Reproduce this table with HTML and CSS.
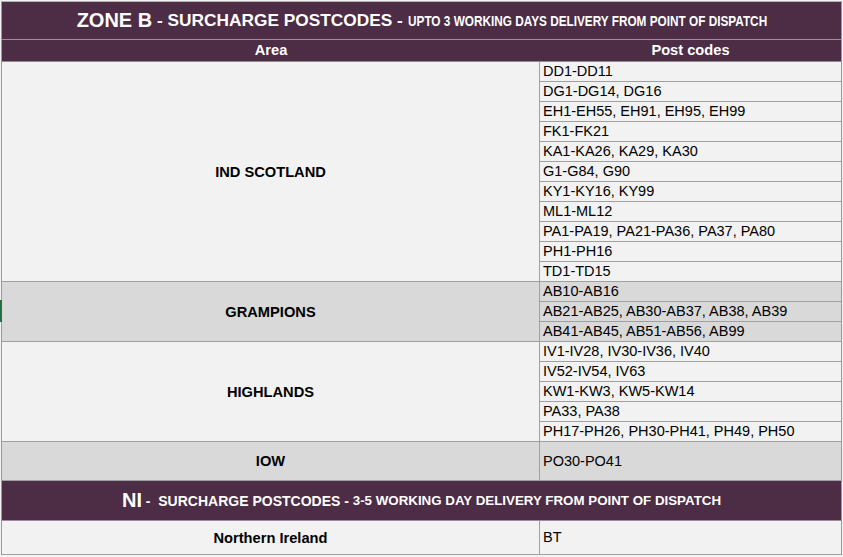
FILE: index.html
```html
<!DOCTYPE html>
<html>
<head>
<meta charset="utf-8">
<link rel="stylesheet" href="styles.css">
</head>
<body>
<div class="sheet">
  <div class="title">
    <span class="big">ZONE B</span><span class="mid"> - SURCHARGE POSTCODES - </span><span class="narrow">UPTO 3 WORKING DAYS DELIVERY FROM POINT OF DISPATCH</span>
  </div>
  <div class="heads">
    <div class="h-area">Area</div>
    <div class="h-codes">Post codes</div>
  </div>
  <div class="block light">
    <div class="area">IND SCOTLAND</div>
    <div class="codes">
      <div class="code">DD1-DD11</div>
      <div class="code">DG1-DG14, DG16</div>
      <div class="code">EH1-EH55, EH91, EH95, EH99</div>
      <div class="code">FK1-FK21</div>
      <div class="code">KA1-KA26, KA29, KA30</div>
      <div class="code">G1-G84, G90</div>
      <div class="code">KY1-KY16, KY99</div>
      <div class="code">ML1-ML12</div>
      <div class="code">PA1-PA19, PA21-PA36, PA37, PA80</div>
      <div class="code">PH1-PH16</div>
      <div class="code">TD1-TD15</div>
    </div>
  </div>
  <div class="block grey">
    <div class="area">GRAMPIONS</div>
    <div class="codes">
      <div class="code">AB10-AB16</div>
      <div class="code">AB21-AB25, AB30-AB37, AB38, AB39</div>
      <div class="code">AB41-AB45, AB51-AB56, AB99</div>
    </div>
  </div>
  <div class="block light">
    <div class="area">HIGHLANDS</div>
    <div class="codes">
      <div class="code">IV1-IV28, IV30-IV36, IV40</div>
      <div class="code">IV52-IV54, IV63</div>
      <div class="code">KW1-KW3, KW5-KW14</div>
      <div class="code">PA33, PA38</div>
      <div class="code">PH17-PH26, PH30-PH41, PH49, PH50</div>
    </div>
  </div>
  <div class="block grey iow">
    <div class="area">IOW</div>
    <div class="codes">
      <div class="code">PO30-PO41</div>
    </div>
  </div>
  <div class="title ni">
    <span class="big">NI</span><span class="mid2"> -  SURCHARGE POSTCODES - </span><span class="small">3-5 WORKING DAY DELIVERY FROM POINT OF DISPATCH</span>
  </div>
  <div class="block light nirow">
    <div class="area">Northern Ireland</div>
    <div class="codes">
      <div class="code">BT</div>
    </div>
  </div>
  <div class="row-mark"></div>
</div>
</body>
</html>
```

FILE: styles.css
```css
body {
  margin: 0;
  background: #f2f2f2;
  font-family: "Liberation Sans", Arial, sans-serif;
  color: #000;
}

.sheet {
  position: relative;
  margin: 1px 0 0 1px;
  width: 839px;
  border-top: 1px solid #b4b4b4;
  border-left: 1px solid #9a9a9a;
  border-right: 1px solid #9a9a9a;
}

.title {
  height: 37px;
  background: #4d2c46;
  color: #fff;
  display: flex;
  align-items: center;
  justify-content: center;
  border-bottom: 1px solid #a08a9b;
  white-space: pre;
  font-weight: bold;
}

.title.ni {
  height: 39px;
}

.big {
  font-size: 20px;
}

.mid {
  font-size: 17.3px;
}

.mid2 {
  font-size: 14px;
}

.narrow {
  display: inline-block;
  font-size: 14.5px;
  transform: scaleX(0.813);
  transform-origin: left center;
  margin-right: -83px;
}

.small {
  font-size: 13.33px;
}

.heads {
  display: flex;
  height: 21px;
  line-height: 21px;
  background: #4d2c46;
  color: #fff;
  font-weight: bold;
  font-size: 14.67px;
  border-bottom: 1px solid #8c8c8c;
}

.h-area {
  width: 538px;
  text-align: center;
}

.h-codes {
  flex: 1;
  text-align: center;
}

.block {
  display: flex;
  border-bottom: 1px solid #a0a0a0;
}

.block.light {
  background: #f2f2f2;
}

.block.grey {
  background: #d9d9d9;
}

.area {
  width: 537px;
  border-right: 1px solid #a0a0a0;
  display: flex;
  align-items: center;
  justify-content: center;
  font-weight: bold;
  font-size: 14.67px;
}

.codes {
  flex: 1;
}

.code {
  height: 19px;
  line-height: 19px;
  padding-left: 3px;
  font-size: 14.5px;
  white-space: nowrap;
  border-bottom: 1px solid #a0a0a0;
}

.code:last-child {
  border-bottom: none;
}

.iow .code {
  height: 38px;
  line-height: 38px;
}

.nirow .code {
  height: 33px;
  line-height: 33px;
}

.row-mark {
  position: absolute;
  left: -2px;
  top: 298px;
  width: 2px;
  height: 22px;
  background: #217346;
}
```
